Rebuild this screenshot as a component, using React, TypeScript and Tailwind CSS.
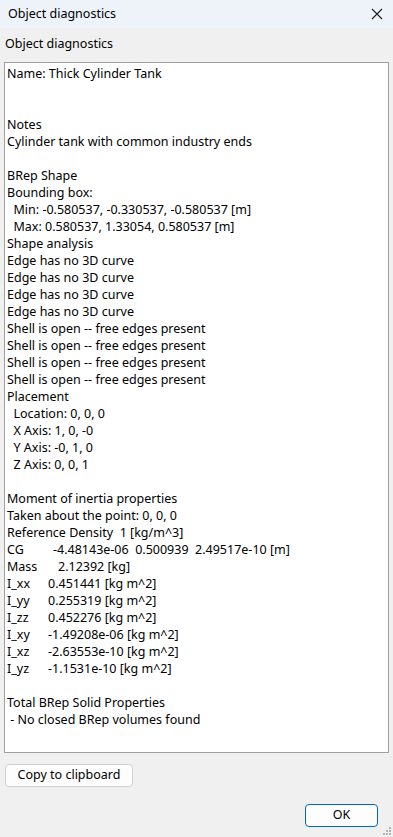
import React from 'react';

const lines: string[] = [
  'Name: Thick Cylinder Tank',
  '',
  '',
  'Notes',
  'Cylinder tank with common industry ends',
  '',
  'BRep Shape',
  'Bounding box:',
  '  Min: -0.580537, -0.330537, -0.580537 [m]',
  '  Max: 0.580537, 1.33054, 0.580537 [m]',
  'Shape analysis',
  'Edge has no 3D curve',
  'Edge has no 3D curve',
  'Edge has no 3D curve',
  'Edge has no 3D curve',
  'Shell is open -- free edges present',
  'Shell is open -- free edges present',
  'Shell is open -- free edges present',
  'Shell is open -- free edges present',
  'Placement',
  '  Location: 0, 0, 0',
  '  X Axis: 1, 0, -0',
  '  Y Axis: -0, 1, 0',
  '  Z Axis: 0, 0, 1',
  '',
  'Moment of inertia properties',
  'Taken about the point: 0, 0, 0',
  'Reference Density  1 [kg/m^3]',
];

const tabbed: { label: string; value: string; w: string }[] = [
  { label: 'CG', value: '-4.48143e-06  0.500939  2.49517e-10 [m]', w: 'w-[46px]' },
  { label: 'Mass', value: '2.12392 [kg]', w: 'w-[51px]' },
  { label: 'I_xx', value: '0.451441 [kg m^2]', w: 'w-[41px]' },
  { label: 'I_yy', value: '0.255319 [kg m^2]', w: 'w-[41px]' },
  { label: 'I_zz', value: '0.452276 [kg m^2]', w: 'w-[41px]' },
  { label: 'I_xy', value: '-1.49208e-06 [kg m^2]', w: 'w-[41px]' },
  { label: 'I_xz', value: '-2.63553e-10 [kg m^2]', w: 'w-[41px]' },
  { label: 'I_yz', value: '-1.1531e-10 [kg m^2]', w: 'w-[41px]' },
];

const tail: string[] = ['', 'Total BRep Solid Properties', ' - No closed BRep volumes found'];

export default function App() {
  return (
    <div className="w-[393px] h-[837px] bg-[#f0f0f0] flex flex-col text-[12.5px] text-black font-['Noto_Sans','Open_Sans',sans-serif] overflow-hidden">
      {/* title bar */}
      <div className="h-[28px] bg-[#eef3f9] flex items-center justify-between pl-[8px] pr-[9px] shrink-0">
        <span className="leading-none">Object diagnostics</span>
        <svg width="12" height="12" viewBox="0 0 12 12" className="mr-[1px]">
          <path d="M1 1 L11 11 M11 1 L1 11" stroke="#1a1a1a" strokeWidth="1.1" fill="none" />
        </svg>
      </div>

      <div className="flex-1 flex flex-col px-[4px]">
        <div className="pt-[7px] pl-[1px] leading-[17px] h-[34px]">Object diagnostics</div>

        {/* text area */}
        <div className="w-[385px] h-[691px] bg-white border border-[#a0a0a0] pt-[2px] pl-[2px] leading-[17px] whitespace-pre">
          {lines.map((l, i) => (
            <div key={i} className="h-[17px]">{l}</div>
          ))}
          {tabbed.map((t) => (
            <div key={t.label} className="h-[17px] flex">
              <span className={t.w + ' shrink-0'}>{t.label}</span>
              <span>{t.value}</span>
            </div>
          ))}
          {tail.map((l, i) => (
            <div key={'t' + i} className="h-[17px]">{l}</div>
          ))}
        </div>

        <div className="pt-[11px] pl-[1px]">
          <button className="w-[128px] h-[23px] bg-[#fdfdfd] border border-[#d0d0d0] rounded-[4px] leading-none">
            Copy to clipboard
          </button>
        </div>

        <div className="flex justify-end pt-[17px] pr-[11px]">
          <button className="w-[73px] h-[23px] bg-[#fdfdfd] border border-[#0067c0] rounded-[4px] leading-none">
            OK
          </button>
        </div>
      </div>

      {/* resize grip */}
      <div className="relative h-0">
        <svg width="10" height="10" viewBox="0 0 10 10" className="absolute right-[1px] bottom-[1px]">
          <rect x="7" y="1" width="2" height="2" fill="#b4b4b4" />
          <rect x="4" y="4" width="2" height="2" fill="#b4b4b4" />
          <rect x="7" y="4" width="2" height="2" fill="#b4b4b4" />
          <rect x="1" y="7" width="2" height="2" fill="#b4b4b4" />
          <rect x="4" y="7" width="2" height="2" fill="#b4b4b4" />
          <rect x="7" y="7" width="2" height="2" fill="#b4b4b4" />
        </svg>
      </div>
    </div>
  );
}
